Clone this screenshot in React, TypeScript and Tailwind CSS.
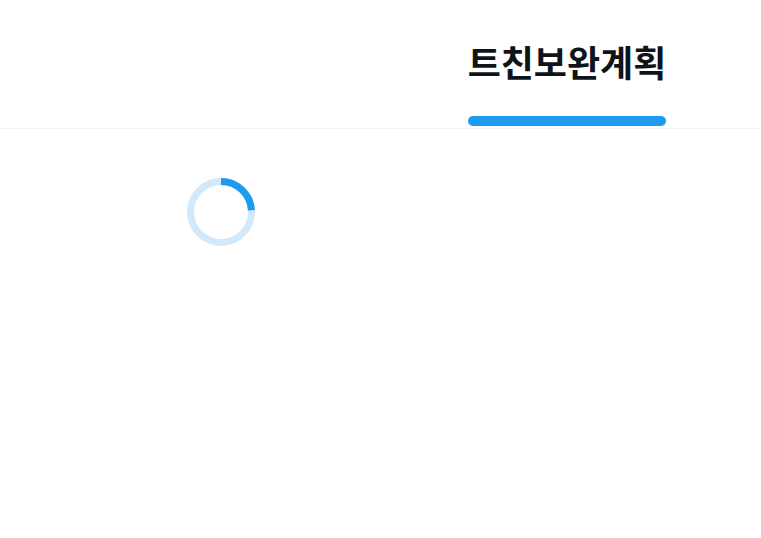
import React from 'react';

export default function App() {
  return (
    <div className="min-h-screen bg-white" style={{ fontFamily: '"Noto Sans CJK KR", "Noto Sans", sans-serif' }}>
      {/* Tab bar */}
      <div className="flex h-[129px] border-b border-[#eff3f4]">
        <div className="flex-1" />
        <div className="flex flex-1 justify-center pr-[5px]">
          <div className="flex flex-col items-stretch">
            <div className="flex flex-1 items-center pt-[6px] text-[36px] font-bold leading-none text-[#0f1419]">
              트친보완계획
            </div>
            <div className="mb-[2px] h-[10px] rounded-full bg-[#1d9bf0]" />
          </div>
        </div>
      </div>

      {/* Loading */}
      <div className="pl-[187px] pt-[49px]">
        <svg width="68" height="68" viewBox="0 0 68 68">
          <circle cx="34" cy="34" r="30.5" fill="none" stroke="#d2e8fb" strokeWidth="7" />
          <circle
            cx="34"
            cy="34"
            r="30.5"
            fill="none"
            stroke="#1d9bf0"
            strokeWidth="7"
            strokeDasharray="46 200"
            transform="rotate(-90 34 34)"
          />
        </svg>
      </div>
    </div>
  );
}
